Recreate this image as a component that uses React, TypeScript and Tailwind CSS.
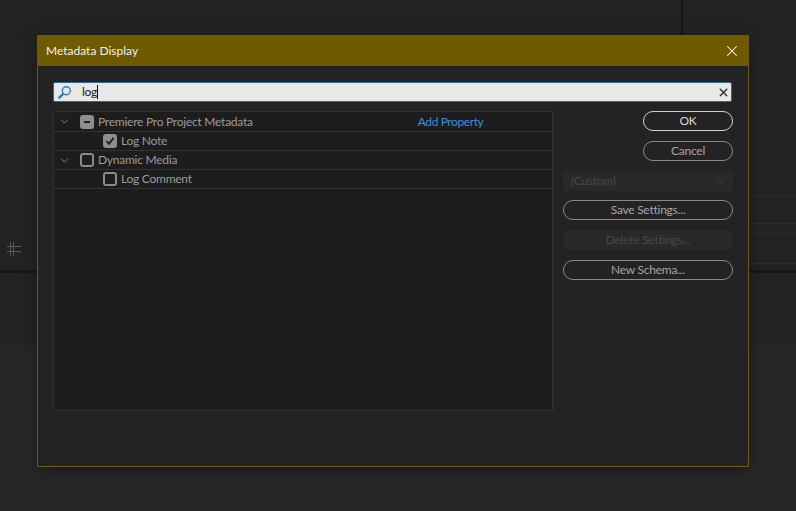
import { ChevronDown, X } from "lucide-react";

function Chevron() {
  return <ChevronDown className="w-[13px] h-[13px] text-[#9a9a9a]" strokeWidth={1.5} />;
}

function Box({ state }: { state?: "mixed" | "checked" }) {
  if (state === "mixed") {
    return (
      <span className="w-[14px] h-[14px] rounded-[3px] bg-[#8e8e8e] flex items-center justify-center">
        <span className="w-[6px] h-[2px] bg-[#1e1e1e]"></span>
      </span>
    );
  }
  if (state === "checked") {
    return (
      <span className="w-[14px] h-[14px] rounded-[3px] bg-[#8e8e8e] flex items-center justify-center">
        <svg width="10" height="10" viewBox="0 0 10 10" fill="none">
          <path d="M1.5 5.2 L4 7.8 L8.6 1.8" stroke="#1e1e1e" strokeWidth="1.9" />
        </svg>
      </span>
    );
  }
  return <span className="w-[14px] h-[14px] rounded-[3px] border-2 border-[#8a8a8a]"></span>;
}

function Row({ label, state, child, last, children }: { label: string; state?: "mixed" | "checked"; child?: boolean; last?: boolean; children?: React.ReactNode }) {
  return (
    <div className={"flex items-center border-b border-[#323232] " + (last ? "h-[20px]" : "h-[19px]")}>
      <div className={child ? "w-[49px]" : "w-[26px] pl-[4px]"}>{!child && <Chevron />}</div>
      <Box state={state} />
      <span className="ml-[4px] text-[#9b9b9b]">{label}</span>
      {children}
    </div>
  );
}

function Btn({ label, strong, full }: { label: string; strong?: boolean; full?: boolean }) {
  return (
    <button
      className={
        "h-[20px] rounded-full border text-center text-[12px] leading-[16px] " +
        (full ? "w-[170px] " : "w-[90px] self-end ") +
        (strong ? "border-[#d2d2d2] text-[#d8d8d8]" : "border-[#8a8a8a] text-[#a6a6a6]")
      }
    >
      {label}
    </button>
  );
}

export default function App() {
  return (
    <div className="relative w-[796px] h-[511px] overflow-hidden bg-[#272727] font-['Lato',sans-serif] text-[12px] tracking-[-0.25px]">
      {/* panels behind the dialog */}
      <div className="flex h-[270px] bg-[#232323]">
        <div className="flex-1 flex items-end pb-[14px] pl-[7px]">
          <svg width="14" height="14" viewBox="0 0 14 14" fill="none" stroke="#555555">
            <path d="M0 4.5H14M0 9.5H14M3.5 0V14M6.5 0V14" />
          </svg>
        </div>
        <div className="w-[2px] h-[40px] bg-[#141414]"></div>
        <div className="w-[113px] flex flex-col pt-[195px]">
          <div className="h-[28px] border-t border-[#2e2e2e]"></div>
          <div className="h-[10px] border-t border-[#2e2e2e]"></div>
          <div className="h-[31px] border-t border-b border-[#2e2e2e]"></div>
        </div>
      </div>
      <div className="h-[3px] bg-[#171717]"></div>
      <div className="h-[72px] bg-[#232323]"></div>

      {/* dialog */}
      <div className="absolute left-[37px] top-[35px] w-[712px] h-[432px] flex flex-col bg-[#232323] border border-[#6c5a15] shadow-[0_4px_14px_rgba(0,0,0,0.35)]">
        <div className="-mx-px -mt-px h-[31px] shrink-0 bg-[#705a00] flex items-center justify-between pl-[9px] pr-[8px]">
          <span className="text-[12px] tracking-normal text-[#f0f0f0] pt-[1px]">Metadata Display</span>
          <X className="w-[18px] h-[18px] text-[#f2f2f2]" strokeWidth={1.4} />
        </div>
        <div className="px-[15px] pt-[16px]">
          <div className="h-[20px] w-[679px] flex items-center rounded-[2px] border-[1.5px] border-[#2c6aa8] bg-[#e8e8e8] pl-[3px] pr-[1px]">
            <svg width="15" height="15" viewBox="0 0 15 15" fill="none" stroke="#2f7bc8">
              <circle cx="9.3" cy="5.7" r="4" strokeWidth="1.4" />
              <path d="M6.4 8.6 L1.6 13.4" strokeWidth="2.2" />
            </svg>
            <span className="ml-[10px] text-[#1d1d1d] border-r border-[#111111] leading-[14px]">log</span>
            <X className="ml-auto w-[13px] h-[13px] text-[#303030]" strokeWidth={2.5} />
          </div>
          <div className="flex mt-[9px] gap-[10px]">
            <div className="w-[500px] h-[300px] border border-[#323232] bg-[#1d1d1d]">
              <Row label="Premiere Pro Project Metadata" state="mixed" last>
                <span className="ml-[165px] text-[#3f8ed8] tracking-[-0.4px]">Add Property</span>
              </Row>
              <Row label="Log Note" state="checked" child />
              <Row label="Dynamic Media" />
              <Row label="Log Comment" child />
            </div>
            <div className="w-[170px] flex flex-col">
              <Btn label="OK" strong />
              <div className="mt-[10px] flex flex-col">
                <Btn label="Cancel" />
              </div>
              <div className="mt-[10px] h-[20px] rounded-[2px] bg-[#292929] flex items-center justify-between pl-[8px] pr-[7px] text-[#484848]">
                <span>(Custom)</span>
                <ChevronDown className="w-[11px] h-[11px]" />
              </div>
              <div className="mt-[9px] flex flex-col">
                <Btn label="Save Settings..." full />
              </div>
              <div className="mt-[10px] h-[20px] rounded-full bg-[#292929] text-center leading-[19px] text-[#484848]">Delete Settings...</div>
              <div className="mt-[10px] flex flex-col">
                <Btn label="New Schema..." full />
              </div>
            </div>
          </div>
        </div>
      </div>
    </div>
  );
}
